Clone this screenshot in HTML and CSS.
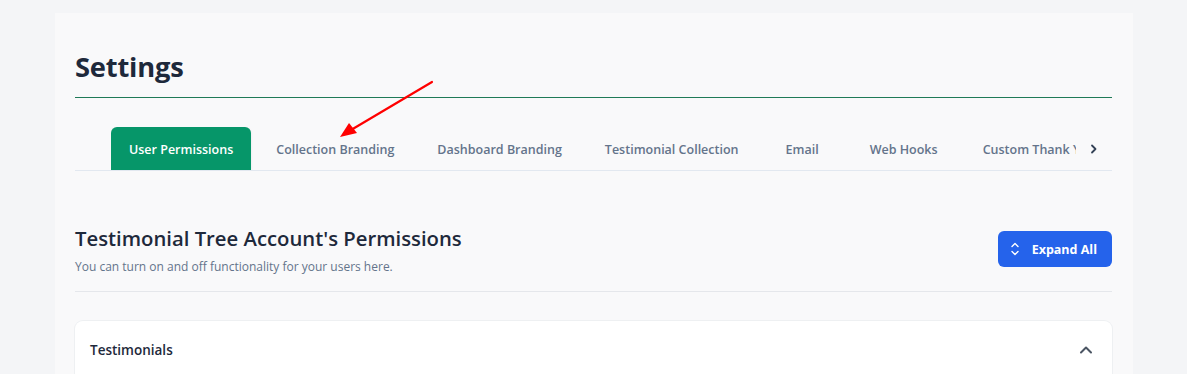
FILE: index.html
```html
<!DOCTYPE html>
<html>
<head>
<meta charset="utf-8">
<link rel="stylesheet" href="styles.css">
</head>
<body>
<div class="page">
  <main class="panel">
    <h1 class="title">Settings</h1>
    <div class="tabbar">
      <div class="tabs-viewport">
        <div class="tabs">
          <div class="tab active">User Permissions</div>
          <div class="tab">Collection Branding</div>
          <div class="tab">Dashboard Branding</div>
          <div class="tab">Testimonial Collection</div>
          <div class="tab tab-wide">Email</div>
          <div class="tab tab-mid">Web Hooks</div>
          <div class="tab">Custom Thank You</div>
        </div>
      </div>
      <div class="tab-arrow">
        <svg width="10" height="10" viewBox="0 0 10 10"><path d="M3 1.5 L6.5 5 L3 8.5" fill="none" stroke="#334155" stroke-width="1.8" stroke-linecap="round" stroke-linejoin="round"/></svg>
      </div>
    </div>

    <section class="section-head">
      <div class="section-text">
        <h2 class="section-title">Testimonial Tree Account's Permissions</h2>
        <p class="section-sub">You can turn on and off functionality for your users here.</p>
      </div>
      <button class="expand-btn">
        <svg width="10" height="14" viewBox="0 0 10 14"><path d="M2 4.5 L5 1.5 L8 4.5 M2 9.5 L5 12.5 L8 9.5" fill="none" stroke="#fff" stroke-width="1.4" stroke-linecap="round" stroke-linejoin="round"/></svg>
        <span>Expand All</span>
      </button>
    </section>

    <div class="card">
      <div class="card-head">
        <span class="card-title">Testimonials</span>
        <svg width="14" height="10" viewBox="0 0 14 10"><path d="M2 7.5 L7 2.5 L12 7.5" fill="none" stroke="#4b5563" stroke-width="2" stroke-linecap="round" stroke-linejoin="round"/></svg>
      </div>
    </div>
  </main>
  <svg class="annotation" width="120" height="80" viewBox="0 0 120 80">
    <line x1="111" y1="2" x2="30" y2="50" stroke="#ff0000" stroke-width="2.2" stroke-linecap="round"/>
    <polygon points="19,57 28,43 36,53" fill="#ff0000"/>
  </svg>
</div>
</body>
</html>
```

FILE: styles.css
```css
* { box-sizing: border-box; }
html, body { margin: 0; padding: 0; }
body {
  background: #f4f5f7;
  font-family: "Open Sans", "Noto Sans", sans-serif;
  color: #1e293b;
  width: 1187px;
  height: 374px;
  overflow: hidden;
}
.page {
  position: relative;
  padding: 13px 54px 0 55px;
}
.panel {
  background: #f9f9fa;
  padding: 36px 21px 0 20px;
  min-height: 400px;
}
.title {
  margin: 0;
  font-size: 27.3px;
  font-weight: 700;
  line-height: 36px;
  color: #1e293b;
  letter-spacing: -0.2px;
  padding-bottom: 12px;
  border-bottom: 1px solid #1f7a57;
}
.tabbar {
  display: flex;
  align-items: flex-end;
  margin-top: 29px;
  border-bottom: 1px solid #e2e8f0;
  height: 44px;
}
.tabs-viewport {
  flex: 1;
  overflow: hidden;
  height: 43px;
  margin-left: 36px;
}
.tabs {
  display: flex;
  gap: 7px;
  height: 100%;
  white-space: nowrap;
}
.tab {
  display: flex;
  align-items: center;
  padding: 2px 18px 0;
  font-size: 12.5px;
  font-weight: 600;
  color: #64748b;
}
.tab.active {
  background: #069669;
  color: #ffffff;
  border-radius: 6px 6px 0 0;
  box-shadow: 0 1px 3px rgba(0,0,0,0.08);
}
.tab-wide { padding: 2px 22px 0; }
.tab-mid { padding: 2px 20px 0 22px; }
.tab-arrow {
  width: 36px;
  height: 43px;
  display: flex;
  align-items: center;
  justify-content: center;
}
.section-head {
  display: flex;
  justify-content: space-between;
  align-items: flex-start;
  padding: 53px 0 16px;
  border-bottom: 1px solid #e5e7eb;
}
.section-title {
  margin: 0;
  font-size: 20.3px;
  font-weight: 600;
  line-height: 28px;
  color: #1e293b;
}
.section-sub {
  margin: 6px 0 0;
  font-size: 12px;
  color: #64748b;
}
.expand-btn {
  display: flex;
  align-items: center;
  gap: 12px;
  height: 36px;
  margin-top: 7px;
  padding: 0 15px 0 12px;
  background: #2563eb;
  color: #fff;
  border: none;
  border-radius: 6px;
  font-family: inherit;
  font-size: 12.5px;
  font-weight: 700;
}
.card {
  margin-top: 29px;
  background: #ffffff;
  border-radius: 8px;
  box-shadow: 0 0 0 1px #eef0f2, 0 1px 2px rgba(0,0,0,0.04);
  height: 80px;
}
.card-head {
  display: flex;
  justify-content: space-between;
  align-items: center;
  padding: 20px 19px 0 15px;
}
.card-title {
  font-size: 13.5px;
  font-weight: 600;
  color: #1e293b;
}
.annotation {
  position: absolute;
  left: 321px;
  top: 80px;
}
```
